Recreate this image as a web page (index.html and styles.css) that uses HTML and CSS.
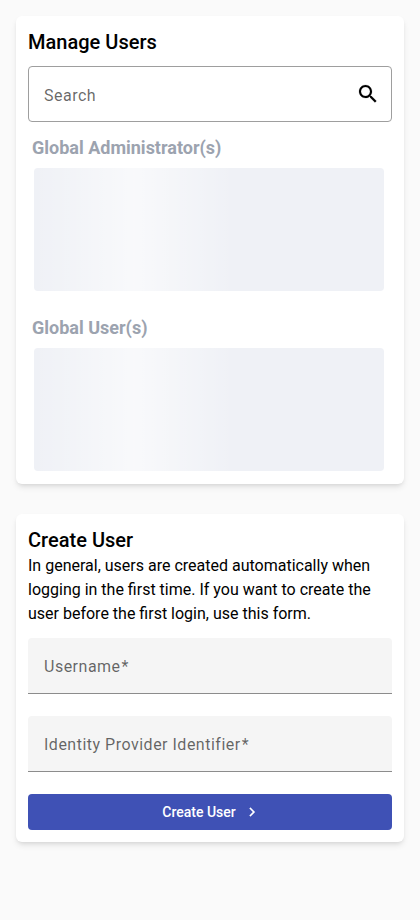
FILE: index.html
```html
<!DOCTYPE html>
<html lang="en">
<head>
<meta charset="utf-8">
<title>Users</title>
<link rel="stylesheet" href="styles.css">
</head>
<body>
<main class="page">
  <section class="card">
    <h2 class="title">Manage Users</h2>
    <div class="search">
      <span class="label">Search</span>
      <svg class="search-icon" viewBox="0 0 24 24" width="24" height="24"><path d="M15.5 14h-.79l-.28-.27C15.41 12.59 16 11.11 16 9.5 16 5.91 13.09 3 9.5 3S3 5.91 3 9.5 5.91 16 9.5 16c1.61 0 3.09-.59 4.23-1.57l.27.28v.79l5 4.99L20.49 19l-4.99-5zm-6 0C7.01 14 5 11.99 5 9.5S7.01 5 9.5 5 14 7.01 14 9.5 11.99 14 9.5 14z"/></svg>
    </div>
    <div class="group">
      <h3 class="group-title">Global Administrator(s)</h3>
      <div class="skeleton"></div>
    </div>
    <div class="group">
      <h3 class="group-title">Global User(s)</h3>
      <div class="skeleton"></div>
    </div>
  </section>
  <section class="card">
    <h2 class="title">Create User</h2>
    <p class="intro">In general, users are created automatically when logging in the first time. If you want to create the user before the first login, use this form.</p>
    <form class="form">
      <div class="field"><span class="label">Username<span class="required">*</span></span></div>
      <div class="field"><span class="label">Identity Provider Identifier<span class="required">*</span></span></div>
      <button class="submit" type="button">Create User
        <svg class="chevron" viewBox="0 0 24 24" width="18" height="18"><path d="M10 6 8.59 7.41 13.17 12l-4.58 4.59L10 18l6-6z"/></svg>
      </button>
    </form>
  </section>
</main>
</body>
</html>
```
FILE: styles.css
```css
* { box-sizing: border-box; }
body {
  margin: 0;
  background: #fafafa;
  color: #000;
  font: 400 16px/24px Roboto, sans-serif;
}
h2, h3, p { margin: 0; }
.page {
  display: flex;
  flex-direction: column;
  gap: 30px;
  padding: 16px;
}
.card {
  padding: 12px;
  border-radius: 6px;
  background: #fff;
  box-shadow: 0 4px 6px -1px rgba(0, 0, 0, .1), 0 2px 4px -2px rgba(0, 0, 0, .1);
}
.title { font-size: 20px; line-height: 28px; font-weight: 500; letter-spacing: .02px; }
.label { color: rgba(0, 0, 0, .6); letter-spacing: .5px; }
.required { margin-left: 1px; }
.search {
  display: flex;
  justify-content: space-between;
  align-items: center;
  height: 56px;
  margin-top: 10px;
  padding: 2px 11px 0 15px;
  border: 1px solid #9e9e9e;
  border-radius: 4px;
}
.search .label { padding-top: 1px; }
.search-icon { display: block; margin: -1.5px -.3px 0 0; stroke: #000; stroke-width: .15; }
.group { padding: 12px 8px 0 4px; height: 180px; }
.group + .group { height: 170px; }
.group-title {
  color: #9ca3af;
  font-size: 18px;
  line-height: 28px;
  font-weight: 700;
}
.skeleton {
  height: 123px;
  margin: 6px 0 0 2px;
  border-radius: 4px;
  background: #eff1f6 linear-gradient(90deg, rgba(255, 255, 255, 0), rgba(255, 255, 255, .6), rgba(255, 255, 255, 0)) 0 0 / 200px 100% no-repeat;
}
.form { display: flex; flex-direction: column; gap: 22px; margin-top: 12px; }
.field {
  display: flex;
  align-items: center;
  height: 56px;
  padding: 3px 16px 0;
  border-bottom: 1px solid #8c8c8c;
  border-radius: 4px 4px 0 0;
  background: #f5f5f5;
}
.submit {
  display: flex;
  align-items: center;
  justify-content: center;
  height: 36px;
  padding: 0;
  border: 0;
  border-radius: 4px;
  background: #3f51b5;
  color: #fff;
  font: 500 14px/20px Roboto, sans-serif;
}
.chevron { display: block; margin: 0 -3.5px 0 7.5px; fill: currentColor; stroke: currentColor; stroke-width: .3; }
```
